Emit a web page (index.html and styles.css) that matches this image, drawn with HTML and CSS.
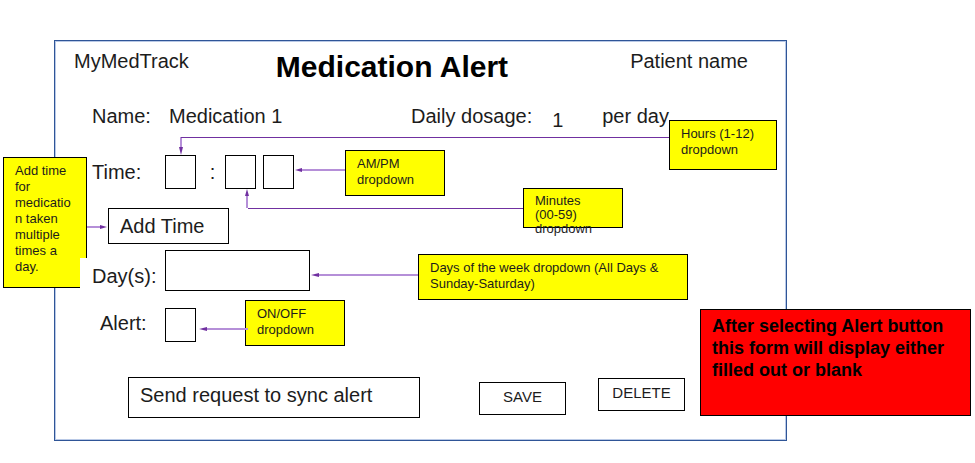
FILE: index.html
```html
<!DOCTYPE html>
<html lang="en">
<head>
<meta charset="utf-8">
<title>Medication Alert</title>
<link rel="stylesheet" href="styles.css">
</head>
<body>
<main class="board">
  <form class="form">
    <header class="form-header">
      <span>MyMedTrack</span>
      <h1 class="title">Medication Alert</h1>
      <span class="patient">Patient name</span>
    </header>

    <div class="row row-name">
      <span class="label">Name:</span>
      <span class="medication">Medication 1</span>
      <span>Daily dosage:</span>
      <span class="dose">1</span>
      <span>per day</span>
    </div>

    <div class="row row-time">
      <label class="label" for="hours">Time:</label>
      <select class="box" id="hours"><option></option></select>
      <span class="colon">:</span>
      <select class="box" aria-label="Minutes"><option></option></select>
      <select class="box box-period" aria-label="AM/PM"><option></option></select>
    </div>

    <button class="button button-add" type="button">Add Time</button>

    <div class="row row-days">
      <label class="label label-days" for="days">Day(s):</label>
      <select class="box box-days" id="days"><option></option></select>
    </div>

    <div class="row row-alert">
      <label class="label label-alert" for="alert">Alert:</label>
      <select class="box" id="alert"><option></option></select>
    </div>

    <footer class="actions">
      <button class="button button-sync" type="button">Send request to sync alert</button>
      <button class="button button-small button-save" type="button">SAVE</button>
      <button class="button button-small button-delete" type="button">DELETE</button>
    </footer>
  </form>

  <aside class="note note-add">Add time for medication taken multiple times a day.</aside>
  <aside class="note note-hours">Hours (1-12) dropdown</aside>
  <aside class="note note-period">AM/PM dropdown</aside>
  <aside class="note note-minutes">Minutes <span class="range">(00-59)</span> dropdown</aside>
  <aside class="note note-days">Days of the week dropdown (All Days &amp; Sunday-Saturday)</aside>
  <aside class="note note-alert">ON/OFF dropdown</aside>
  <aside class="note note-form">After selecting Alert button this form will display either filled out or blank</aside>

  <svg class="arrows" width="975" height="463" viewBox="0 0 975 463" aria-hidden="true">
    <g class="line">
      <path d="M669 137.500H180.500"/>
      <path d="M523 208.500H248"/>
    </g>
    <g class="line line-soft">
      <path d="M181 138V148"/>
      <path d="M345 170H301"/>
      <path d="M247 208V195"/>
      <path d="M87 227H101"/>
      <path d="M418 275H317"/>
      <path d="M248 329H205"/>
    </g>
    <g class="head">
      <path d="M179 147H183L181 155Z"/>
      <path d="M302 168V172L295 170Z"/>
      <path d="M245 196H249L247 189Z"/>
      <path d="M100 225V229L107 227Z"/>
      <path d="M319 273V277L311 275Z"/>
      <path d="M207 327V331L199 329Z"/>
    </g>
  </svg>
</main>
</body>
</html>
```

FILE: styles.css
```css
* {
  box-sizing: border-box;
}

body {
  margin: 0;
  background: #fff;
  color: #1c1c1c;
  font: 20px/24px "Liberation Sans", Arial, sans-serif;
}

.board {
  position: relative;
  padding: 40px 188px 22px 54px;
}

.form {
  padding: 8px 0 22px;
  border: 1px solid #2f5597;
  box-shadow: inset 0 0 0 1px #b9c9e6;
}

.form-header {
  display: flex;
  align-items: flex-start;
  padding: 0 38px 0 19px;
}

.title {
  margin: 0 0 0 87px;
  color: #000;
  font-size: 30px;
  line-height: 36px;
}

.patient {
  margin-left: auto;
}

.row {
  display: flex;
  align-items: center;
  padding-left: 25px;
}

.label {
  width: 85px;
  padding-left: 12px;
}

.row-name {
  align-items: flex-start;
  margin-top: 19px;
}

.medication {
  width: 246px;
  padding-left: 4px;
}

.dose {
  width: 50px;
  margin-left: 20px;
  line-height: 32px;
}

.row-time {
  margin-top: 19px;
}

.box,
.button {
  margin: 0;
  border: 1px solid #000;
  border-radius: 0;
  background: #fff;
  color: inherit;
  font: inherit;
}

.box {
  appearance: none;
  width: 31px;
  height: 34px;
  padding: 0;
}

.colon {
  width: 29px;
  padding-left: 4px;
  text-align: center;
}

.box-period {
  margin-left: 7px;
}

.button-add {
  display: block;
  width: 121px;
  margin: 19px 0 0 53px;
  padding: 5px 11px;
  text-align: left;
}

.row-days {
  align-items: flex-end;
  margin-top: 6px;
}

.label-days {
  z-index: 2;
  padding-top: 6px;
  padding-bottom: 3px;
  background: #fff;
}

.box-days {
  width: 145px;
  height: 41px;
}

.row-alert {
  align-items: flex-start;
  margin-top: 17px;
}

.label-alert {
  padding-left: 20px;
  line-height: 30px;
}

.actions {
  display: flex;
  align-items: flex-start;
  margin-top: 35px;
  padding-left: 73px;
}

.button-sync {
  width: 292px;
  padding: 5px 11px 10px;
  text-align: left;
}

.button-small {
  width: 87px;
  padding: 4px 0 7px;
  font-size: 15px;
  line-height: 20px;
}

.button-save {
  margin: 5px 32px 0 59px;
}

.button-delete {
  margin-top: 1px;
}

/* Sticky notes laid over the form */
.note {
  position: absolute;
  padding: 5px 11px;
  border: 1px solid #000;
  background: #ff0;
  font-size: 13px;
  line-height: 16px;
}

.note-add {
  top: 157px;
  left: 3px;
  width: 84px;
  height: 131px;
  overflow-wrap: anywhere;
}

.note-hours {
  top: 120px;
  left: 669px;
  width: 108px;
  height: 50px;
}

.note-period {
  top: 150px;
  left: 345px;
  width: 100px;
  height: 46px;
}

.note-minutes {
  top: 188px;
  left: 523px;
  width: 100px;
  height: 40px;
  line-height: 14px;
}

.range {
  white-space: nowrap;
}

.note-days {
  top: 254px;
  left: 418px;
  width: 270px;
  height: 46px;
}

.note-alert {
  top: 300px;
  left: 245px;
  width: 100px;
  height: 46px;
}

.note-form {
  top: 309px;
  right: 4px;
  width: 271px;
  height: 107px;
  background: #f00;
  color: #000;
  font-size: 18px;
  font-weight: bold;
  line-height: 22px;
}

.arrows {
  position: absolute;
  top: 0;
  left: 0;
  pointer-events: none;
}

.line {
  fill: none;
  stroke: #7030a0;
}

.line-soft {
  stroke: #b58fd8;
  stroke-width: 2px;
}

.head {
  fill: #7030a0;
}
```
